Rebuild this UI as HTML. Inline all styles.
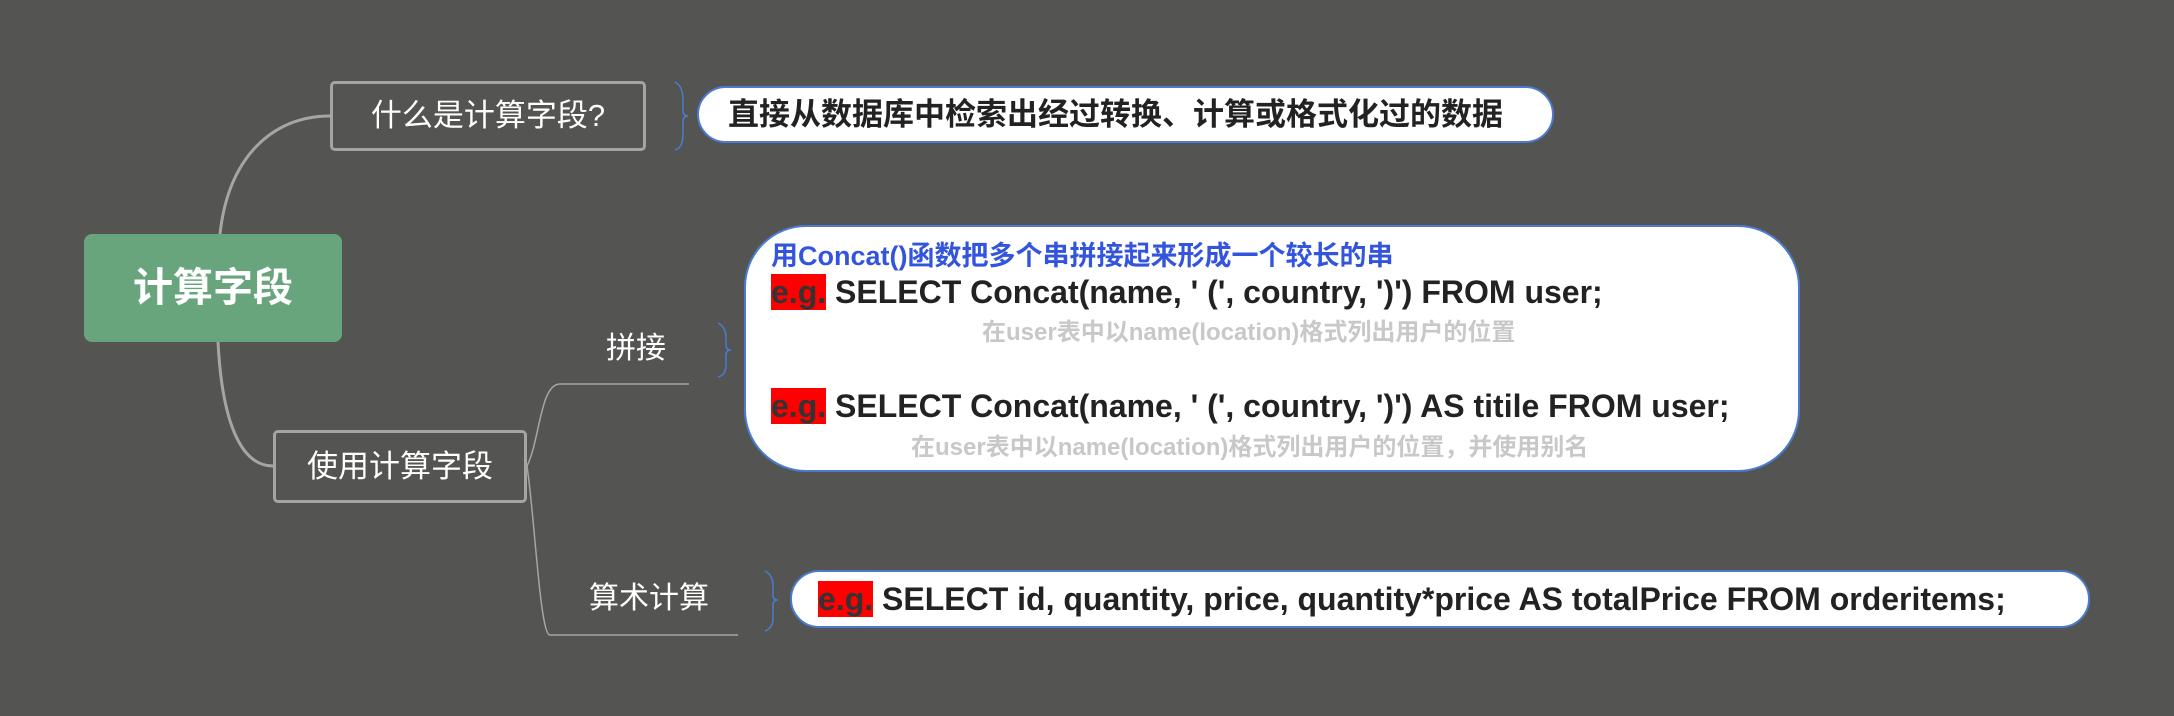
<!DOCTYPE html>
<html><head><meta charset="utf-8"><style>
body{margin:0;width:2174px;height:716px;background:#545553;position:relative;overflow:hidden;font-family:"Liberation Sans","Noto Sans CJK SC",sans-serif}
div{position:absolute;box-sizing:border-box}
.t{white-space:nowrap}
.eg{background:#ff0000;color:#333}
</style></head><body>
<svg width="2174" height="716" style="position:absolute;left:0;top:0">
<path d="M220 234 C228 160 270 116 330 116" fill="none" stroke="#a5a5a4" stroke-width="3"/>
<path d="M218 342 C222 420 240 466 273 466" fill="none" stroke="#a5a5a4" stroke-width="3"/>
<path d="M527 466 C540 440 540 384 560 384 L689 384" fill="none" stroke="#a5a5a4" stroke-width="1.5"/>
<path d="M527 466 C535 520 540 635 550 635 L738 635" fill="none" stroke="#a5a5a4" stroke-width="1.5"/>
<path d="M675 82 Q683 86 683 100 L683 110 Q683 116 688 116 Q683 116 683 122 L683 134 Q683 148 675 150" fill="none" stroke="#4a7bd0" stroke-width="1.5"/>
<path d="M718 323 Q726 327 726 338 L726 345 Q726 350 731 350 Q726 350 726 355 L726 365 Q726 375 718 377" fill="none" stroke="#4a7bd0" stroke-width="1.5"/>
<path d="M765 571 Q773 575 773 586 L773 595 Q773 600 778 600 Q773 600 773 605 L773 618 Q773 628 765 631" fill="none" stroke="#4a7bd0" stroke-width="1.5"/>
</svg>
<div style="left:84px;top:234px;width:258px;height:108px;background:#68a57d;border-radius:8px;color:#fff;font-weight:bold;font-size:40px;line-height:108px;text-align:center">计算字段</div>
<div style="left:330px;top:81px;width:316px;height:70px;border:3px solid #a5a5a4;border-radius:5px;color:#fff;font-size:31px;line-height:64px;text-align:center">什么是计算字段?</div>
<div style="left:697px;top:86px;width:857px;height:57px;background:#fff;border:2px solid #4a7bd0;border-radius:29px;color:#222;font-weight:bold;font-size:31px;line-height:53px;padding-left:29px" class="t">直接从数据库中检索出经过转换、计算或格式化过的数据</div>
<div class="t" style="left:606px;top:328px;color:#fff;font-size:30px;line-height:42px">拼接</div>
<div style="left:273px;top:430px;width:254px;height:73px;border:3px solid #a5a5a4;border-radius:5px;color:#fff;font-size:31px;line-height:67px;text-align:center">使用计算字段</div>
<div class="t" style="left:589px;top:578px;color:#fff;font-size:30px;line-height:42px">算术计算</div>
<div style="left:744px;top:225px;width:1056px;height:247px;background:#fff;border:2px solid #4a7bd0;border-radius:62px"></div>
<div class="t" style="left:771px;top:239px;color:#3355dd;font-weight:bold;font-size:27px;line-height:34px">用Concat()函数把多个串拼接起来形成一个较长的串</div>
<div class="t" style="left:771px;top:273px;color:#222;font-weight:bold;font-size:32px;line-height:38px"><span class="eg">e.g.</span> SELECT Concat(name, ' (', country, ')') FROM user;</div>
<div class="t" style="left:982px;top:318px;color:#c8c8c8;font-weight:bold;font-size:24px;line-height:30px">在user表中以name(location)格式列出用户的位置</div>
<div class="t" style="left:771px;top:387px;color:#222;font-weight:bold;font-size:32px;line-height:38px"><span class="eg">e.g.</span> SELECT Concat(name, ' (', country, ')') AS titile FROM user;</div>
<div class="t" style="left:911px;top:433px;color:#c8c8c8;font-weight:bold;font-size:24px;line-height:30px">在user表中以name(location)格式列出用户的位置，并使用别名</div>
<div style="left:790px;top:570px;width:1300px;height:58px;background:#fff;border:2px solid #4a7bd0;border-radius:29px"></div>
<div class="t" style="left:818px;top:580px;color:#222;font-weight:bold;font-size:32px;line-height:38px"><span class="eg">e.g.</span> SELECT id, quantity, price, quantity*price AS totalPrice FROM orderitems;</div>
</body></html>
